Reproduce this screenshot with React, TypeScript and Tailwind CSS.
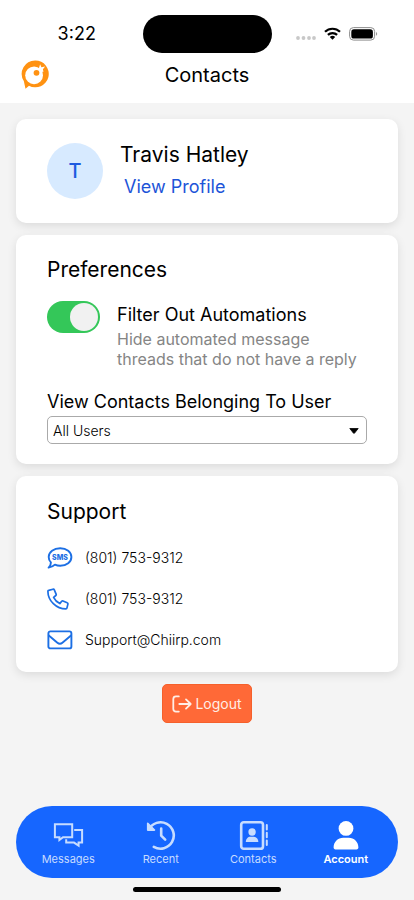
import * as React from "react";

function BirdLogo() {
  return (
    <svg viewBox="0 0 28 30" className="h-[30px] w-7" aria-hidden="true">
      <path d="M14.300 1.500a13.400 13.400 0 1 1-6.300 25.200L4.500 29.800 2.800 22A13.400 13.400 0 0 1 14.300 1.500z" fill="#ff9212" />
      <circle cx="13.100" cy="16.300" r="8.900" fill="#fff" />
      <path d="m17.600 10.300 1.500-5.100 1.300 3 3.700-.6-2.200 2.700.6 2.400-3 .4z" fill="#fff" />
      <circle cx="15.500" cy="13.800" r="2.900" fill="#ff9212" />
    </svg>
  );
}

function StatusBar() {
  return (
    <div className="grid h-[67px] grid-cols-[1fr_129px_1fr] items-center">
      <span className="justify-self-center pl-[11px] text-[18px] leading-6">3:22</span>
      <div className="h-[38px] rounded-full bg-black" />
      <div className="flex items-center justify-end gap-2 pr-9">
        <svg viewBox="0 0 21 14" className="h-3.5 w-[21px]" fill="#c8c8c8" aria-hidden="true">
          <circle cx="3" cy="11" r="1.900" />
          <circle cx="8.500" cy="11" r="1.900" />
          <circle cx="14" cy="11" r="1.900" />
          <circle cx="19" cy="11" r="1.900" />
        </svg>
        <svg viewBox="0 0 17 13" className="h-[13px] w-[17px]" aria-hidden="true">
          <path d="M1 4.800a10.700 10.700 0 0 1 15 0M3.900 7.900a6.600 6.600 0 0 1 9.200 0" fill="none" stroke="#000" strokeWidth="2.200" />
          <path d="M8.500 12.800 5.800 10a3.900 3.900 0 0 1 5.400 0z" />
        </svg>
        <svg viewBox="0 0 29 14" className="h-3.5 w-[29px]" aria-hidden="true">
          <rect x="0.600" y="0.600" width="25" height="12.500" rx="3.800" fill="none" stroke="#8e8e8e" />
          <rect x="2.300" y="2.300" width="21.600" height="9.200" rx="2.600" />
          <path d="M27 5c1.600.5 1.600 3.300 0 3.800z" fill="#999" />
        </svg>
      </div>
    </div>
  );
}

function SmsIcon() {
  return (
    <svg viewBox="0 0 26 22" className="h-[22px] w-[26px]" aria-hidden="true">
      <path
        d="M13.200 1.200c6.400 0 11.200 3.700 11.200 8.700s-4.800 8.900-11.200 8.900c-2 0-3.700-.4-5.300-1.100-1.600 1.600-3.800 2.600-6.300 2.900 1.400-1.300 2.300-2.900 2.300-5.200C2.500 14 1.700 12 1.700 9.900c0-5 5.100-8.700 11.500-8.700z"
        fill="none"
        stroke="#1c6fe4"
        strokeWidth="1.900"
        strokeLinejoin="round"
      />
      <text x="13" y="12.800" textAnchor="middle" className="text-[7px] font-extrabold" fill="#1c6fe4">
        SMS
      </text>
    </svg>
  );
}

function PhoneIcon() {
  return (
    <svg viewBox="0 0 22 22" className="h-[22px] w-[22px]" fill="none" stroke="#1c6fe4" strokeWidth="1.700" strokeLinejoin="round" aria-hidden="true">
      <path d="M1.600 2.400 6 1.200c.6-.1 1.100.1 1.300.7l1.800 4.300c.2.500.1 1-.3 1.300L6.600 9.400c1.400 2.900 3.300 4.800 6.200 6.200l1.900-2.300c.3-.4.8-.5 1.300-.3l4.200 1.800c.6.2.8.7.7 1.300l-1 4c-.1.500-.5.800-1 .8C9.300 20.900 1 12.700.9 3.400c0-.5.2-.9.700-1z" />
    </svg>
  );
}

function MailIcon() {
  return (
    <svg viewBox="0 0 26 20" className="h-5 w-[26px]" fill="none" stroke="#1c6fe4" strokeWidth="1.900" strokeLinejoin="round" aria-hidden="true">
      <rect x="1.400" y="1.400" width="23" height="17" rx="2" />
      <path d="m1.500 5.300 8.900 7.500c1.600 1.300 3.400 1.300 5 0l8.900-7.500" />
    </svg>
  );
}

function LogoutIcon() {
  return (
    <svg viewBox="0 0 20 18" className="h-[18px] w-5" fill="none" stroke="currentColor" strokeWidth="1.800" strokeLinecap="round" strokeLinejoin="round" aria-hidden="true">
      <path d="M6.800 1.400H4A2.700 2.700 0 0 0 1.300 4v10A2.700 2.700 0 0 0 4 16.600h2.800M7.300 9h11.300M14 4.400 18.700 9 14 13.600" />
    </svg>
  );
}

function MessagesIcon() {
  return (
    <svg viewBox="0 0 32 32" className="size-8" fill="none" stroke="currentColor" strokeWidth="2" aria-hidden="true">
      <path d="M2.900 5.200h17.300v13H11L7.400 21v-2.800H2.900z" />
      <path d="M22.200 11h7.900v12.600h-3.500v3l-4.600-3h-7.800v-3.400" />
    </svg>
  );
}

function RecentIcon() {
  return (
    <svg viewBox="0 0 32 32" className="size-8" fill="none" stroke="currentColor" strokeWidth="2.600" strokeLinecap="round" strokeLinejoin="round" aria-hidden="true">
      <path d="M3.800 10.500A13.200 13.200 0 1 1 8.800 27.800" />
      <path d="M2.700 4.300v6.800h6.800z" fill="currentColor" strokeWidth="1.600" />
      <path d="M16.200 9.500v7.200l4 4" />
    </svg>
  );
}

function ContactsIcon() {
  return (
    <svg viewBox="0 0 32 32" className="size-8" aria-hidden="true">
      <rect x="4.200" y="3.200" width="21.800" height="26.600" rx="2.600" fill="none" stroke="currentColor" strokeWidth="2.600" />
      <circle cx="15.100" cy="13" r="3.700" fill="currentColor" />
      <path d="M8.800 23c0-3.300 2.200-5.300 4.600-5.300h3.400c2.400 0 4.600 2 4.600 5.300z" fill="currentColor" />
      <path d="M29.800 6v4.600M29.800 13.700v4.600M29.800 21.400V26" stroke="currentColor" strokeWidth="2" strokeLinecap="round" />
    </svg>
  );
}

function AccountIcon() {
  return (
    <svg viewBox="0 0 32 32" className="size-8" fill="currentColor" aria-hidden="true">
      <circle cx="16" cy="9.400" r="7.400" />
      <path d="M3.600 28.600c0-6 4.400-9.900 9.600-9.900h5.600c5.200 0 9.600 3.900 9.600 9.900 0 1.100-.7 1.800-1.800 1.800H5.400c-1.100 0-1.800-.7-1.800-1.800z" />
    </svg>
  );
}

interface CardProps {
  className: string;
  children: React.ReactNode;
}

function Card({ className, children }: CardProps) {
  return (
    <section className={`rounded-[10px] bg-white px-[31px] shadow-[0_3px_10px_rgba(0,0,0,0.1)] ${className}`}>
      {children}
    </section>
  );
}

const supportLinks = [
  { label: "(801) 753-9312", href: "sms:8017539312", icon: <SmsIcon /> },
  { label: "(801) 753-9312", href: "tel:8017539312", icon: <PhoneIcon /> },
  { label: "Support@Chiirp.com", href: "mailto:Support@Chiirp.com", icon: <MailIcon /> },
];

const tabs = [
  { label: "Messages", icon: <MessagesIcon /> },
  { label: "Recent", icon: <RecentIcon /> },
  { label: "Contacts", icon: <ContactsIcon /> },
  { label: "Account", icon: <AccountIcon /> },
];

export default function App() {
  const [filterAutomations, setFilterAutomations] = React.useState(true);
  const [activeTab, setActiveTab] = React.useState("Account");

  return (
    <div className="flex min-h-screen flex-col bg-[#f4f4f4] font-['Inter','Liberation_Sans',sans-serif] text-black">
      <header className="bg-white pb-1">
        <StatusBar />
        <div className="grid h-8 grid-cols-[1fr_auto_1fr] items-start px-[21px]">
          <div className="-mt-2">
            <BirdLogo />
          </div>
          <h1 className="text-[20px] leading-4">Contacts</h1>
        </div>
      </header>

      <main className="flex flex-col gap-3 px-4 pt-4">
        <Card className="flex items-center gap-[17px] py-5">
          <div className="flex size-14 items-center justify-center rounded-full bg-[#d7eaff] text-[20px] font-medium text-[#1d5be0]">
            T
          </div>
          <div className="flex flex-col items-start">
            <h2 className="text-[21px] leading-8">Travis Hatley</h2>
            <a href="#profile" className="ml-1 text-[18px] leading-8 text-[#1d54d8]">
              View Profile
            </a>
          </div>
        </Card>

        <Card className="pt-[21px] pb-5">
          <h2 className="text-[21px] leading-7">Preferences</h2>
          <div className="mt-[17px] flex items-start gap-[17px]">
            <input
              id="filter-automations"
              type="checkbox"
              role="switch"
              checked={filterAutomations}
              onChange={(e) => setFilterAutomations(e.target.checked)}
              className="flex h-8 w-[53px] shrink-0 appearance-none items-center rounded-full bg-gray-300 px-0.5 before:size-7 before:rounded-full before:bg-[#f1f1f1] checked:justify-end checked:bg-[#34c759]"
            />
            <div>
              <label htmlFor="filter-automations" className="block text-[18px] leading-7">
                Filter Out Automations
              </label>
              <p className="text-[16px] leading-5 text-[#858585]">
                Hide automated message
                <br />
                threads that do not have a reply
              </p>
            </div>
          </div>
          <label htmlFor="user" className="mt-[19px] block text-[18px] leading-7">
            View Contacts Belonging To User
          </label>
          <div className="relative">
            <select
              id="user"
              className="block h-7 w-full appearance-none rounded-[5px] border border-[#aaa] bg-white pl-[5px] text-[14px] font-light"
            >
              <option>All Users</option>
            </select>
            <svg viewBox="0 0 10 6" className="pointer-events-none absolute top-3 right-2 h-1.5 w-2.5" aria-hidden="true">
              <path d="M.8.500h8.400L5.600 5.100a.8.800 0 0 1-1.200 0z" stroke="#000" strokeWidth=".8" strokeLinejoin="round" />
            </svg>
          </div>
        </Card>

        <Card className="pt-[22px] pb-3">
          <h2 className="text-[21px] leading-7">Support</h2>
          <ul className="mt-[11px]">
            {supportLinks.map((link) => (
              <li key={link.href}>
                <a href={link.href} className="grid h-[41px] grid-cols-[26px_1fr] items-center gap-3 text-[14px] font-light">
                  {link.icon}
                  {link.label}
                </a>
              </li>
            ))}
          </ul>
        </Card>

        <button
          type="button"
          className="flex h-[39px] w-[90px] items-center justify-center gap-[3px] self-center rounded-[5px] border border-[#f5602b] bg-[#ff6937] text-[14px] text-[#ffeee6]"
        >
          <LogoutIcon />
          Logout
        </button>
      </main>

      <footer className="mt-auto px-4 pb-2">
        <nav className="grid h-[72px] grid-cols-4 rounded-full bg-[#1666ff] px-[6px]">
          {tabs.map((tab) => (
            <button
              key={tab.label}
              type="button"
              aria-current={tab.label === activeTab ? "page" : undefined}
              onClick={() => setActiveTab(tab.label)}
              className="flex flex-col items-center justify-center pt-0.5 text-[11px] leading-4 text-[#c7dcff] aria-[current=page]:font-semibold aria-[current=page]:text-white"
            >
              {tab.icon}
              {tab.label}
            </button>
          ))}
        </nav>
        <div className="mx-auto mt-[9px] h-[5px] w-[148px] rounded-full bg-black" />
      </footer>
    </div>
  );
}
